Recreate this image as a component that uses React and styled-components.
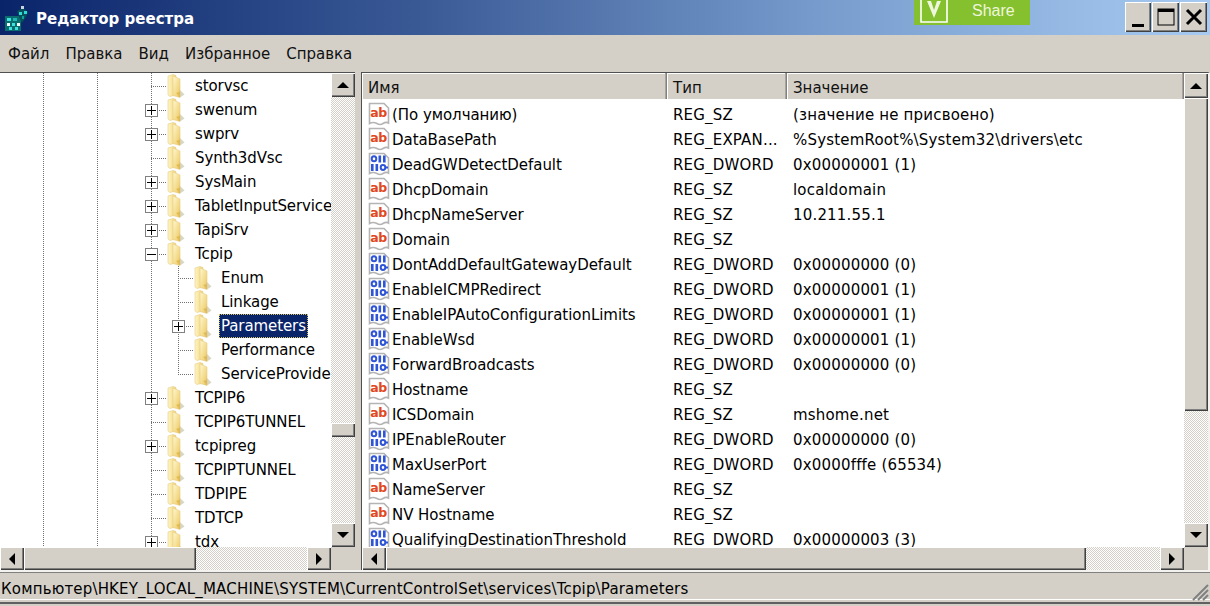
import React from "react";
import styled, { createGlobalStyle } from "styled-components";

const UI_FONT = `"DejaVu Sans", Verdana, sans-serif`;
const FACE = "#d4d0c8";

const GlobalStyle = createGlobalStyle`
  html, body {
    margin: 0;
    padding: 0;
    background: ${FACE};
    font-family: ${UI_FONT};
  }
`;

const Window = styled.div`
  width: 1210px;
  height: 606px;
  display: flex;
  flex-direction: column;
  overflow: hidden;
  background: ${FACE};
  font-size: 15px;
  color: #000;
`;

const TitleBar = styled.div`
  height: 35px;
  flex: none;
  display: flex;
  align-items: flex-start;
  padding: 0 3px 0 4px;
  box-sizing: border-box;
  background: linear-gradient(90deg, #0a246a 0%, #3a5a96 35%, #7ba0d0 70%, #a6caf0 100%);
`;

const AppIcon = styled.svg`
  width: 26px;
  height: 26px;
  margin-top: 5px;
  flex: none;
`;

const TitleText = styled.div`
  margin: 9px 0 0 6px;
  color: #fff;
  font-weight: 700;
  font-size: 15px;
  line-height: 20px;
`;

const ShareButton = styled.div`
  margin-left: auto;
  width: 116px;
  height: 25px;
  display: flex;
  align-items: flex-start;
  background: #85c02e;
  color: #eef7dc;
  font-family: "Liberation Sans", Arial, sans-serif;
  font-size: 16px;
  line-height: 21px;
`;

const ShareLabel = styled.span`
  margin-left: 24px;
`;

const WindowControls = styled.div`
  margin: 2px 0 0 95px;
  display: flex;
  gap: 1px;
`;

const bevel = `
  background-color: ${FACE};
  box-shadow: inset 1px 1px 0 #fff, inset -1px -1px 0 #404040, inset -2px -2px 0 #808080;
`;

const ControlButton = styled.div`
  ${bevel}
  width: ${(p) => p.$width || 26}px;
  height: 30px;
  display: flex;
  align-items: center;
  justify-content: center;
`;

const MenuBar = styled.div`
  height: 37px;
  flex: none;
  display: flex;
  align-items: center;
  gap: 16px;
  padding: 0 8px;
  box-sizing: border-box;
`;

const MenuItem = styled.span`
  color: #111;
`;

const Panes = styled.div`
  height: 500px;
  flex: none;
  display: flex;
`;

const Pane = styled.div`
  box-sizing: border-box;
  width: ${(p) => p.$width}px;
  flex: none;
  display: grid;
  grid-template-columns: 1fr 24px;
  grid-template-rows: 474px 23px;
  border-style: solid;
  border-color: #505050 #f4f2ee #707070 #505050;
  border-width: 1px ${(p) => p.$right}px 2px ${(p) => p.$left}px;
`;

const Splitter = styled.div`
  width: 6px;
  flex: none;
`;

const dots = "repeating-linear-gradient(#707070 0 1px, transparent 1px 2px)";
const dotsH = "repeating-linear-gradient(90deg, #707070 0 1px, transparent 1px 2px)";

const Tree = styled.div`
  overflow: hidden;
  background-color: #fff;
  background-image: ${dots}, ${dots}, ${dots};
  background-repeat: no-repeat;
  background-size: 1px 100%;
  background-position: 43px 0, 97px 0, 151px 0;
  padding-top: 1px;
  box-sizing: border-box;
`;

const Group = styled.div`
  background-image: ${dots};
  background-repeat: no-repeat;
  background-size: 1px calc(100% - 12px);
  background-position: 178px 0;
`;

const TreeRow = styled.div`
  height: 24px;
  display: flex;
  align-items: center;
  padding-left: ${(p) => (p.$level === 2 ? 172 : 145)}px;
  white-space: nowrap;
`;

const Connector = styled.div`
  width: 22px;
  height: 100%;
  flex: none;
  display: flex;
  align-items: center;
  background-image: ${dotsH};
  background-repeat: no-repeat;
  background-size: 16px 1px;
  background-position: right center;
`;

const Expander = styled.div`
  width: 11px;
  height: 11px;
  border: 1px solid #808080;
  background: #fff;
  display: flex;
  align-items: center;
  justify-content: center;
`;

const FolderIcon = styled.svg`
  width: 18px;
  height: 24px;
  flex: none;
`;

const TreeLabel = styled.span`
  box-sizing: border-box;
  margin-left: ${(p) => (p.$level === 2 ? 7 : 8)}px;
  padding: 1px 2px 0;
  line-height: 23px;
  letter-spacing: -0.1px;
  color: ${(p) => (p.$selected ? "#fff" : "#000")};
  background: ${(p) => (p.$selected ? "#0a246a" : "transparent")};
  outline: ${(p) => (p.$selected ? "1px dotted #d8c060" : "none")};
  outline-offset: -1px;
`;

const VBar = styled.div`
  display: flex;
  flex-direction: column;
`;

const HBar = styled.div`
  display: flex;
`;

const Corner = styled.div`
  background: ${FACE};
`;

const Track = styled.div`
  flex: ${(p) => (p.$size ? `0 0 ${p.$size}px` : "1")};
  background: conic-gradient(${FACE} 25%, #fff 0 50%, ${FACE} 0 75%, #fff 0) 0 0 / 2px 2px;
`;

const Thumb = styled.div`
  ${bevel}
  flex: 0 0 ${(p) => p.$size}px;
`;

const ArrowButton = styled.div`
  ${bevel}
  flex: 0 0 ${(p) => p.$size || 24}px;
  display: flex;
  align-items: center;
  justify-content: center;
`;

const arrowShapes = {
  up: "border-width: 0 6px 6px; border-color: transparent transparent #000;",
  down: "border-width: 6px 6px 0; border-color: #000 transparent transparent;",
  left: "border-width: 6px 6px 6px 0; border-color: transparent #000 transparent transparent;",
  right: "border-width: 6px 0 6px 6px; border-color: transparent transparent transparent #000;",
};

const Arrow = styled.span`
  width: 0;
  height: 0;
  border-style: solid;
  ${(p) => arrowShapes[p.$dir]}
`;

const Values = styled.div`
  overflow: hidden;
  background: #fff;
`;

const columns = "305px 120px 1fr";

const HeaderRow = styled.div`
  height: 26px;
  display: grid;
  grid-template-columns: ${columns};
  margin-bottom: 3px;
  box-sizing: border-box;
  border-bottom: 1px solid #808080;
`;

const HeaderCell = styled.div`
  background: ${FACE};
  padding: 4px 0 0 6px;
  line-height: 22px;
  color: #111;
  box-sizing: border-box;
  box-shadow: inset -1px 0 0 #808080, inset -2px 0 0 #a8a49c, inset 1px 1px 0 #fff;
`;

const ValueRow = styled.div`
  height: 25px;
  display: grid;
  grid-template-columns: ${columns};
  align-items: center;
  white-space: nowrap;
`;

const NameCell = styled.div`
  display: flex;
  align-items: center;
  gap: 2px;
  padding-left: 6px;
  letter-spacing: -0.05px;
`;

const Cell = styled.div`
  padding-left: 6px;
  overflow: hidden;
  letter-spacing: 0.18px;
`;

const TypeIconBox = styled.svg`
  width: 22px;
  height: 25px;
  flex: none;
`;

const StatusBar = styled.div`
  height: 32px;
  flex: none;
  box-sizing: border-box;
  display: flex;
  justify-content: space-between;
  align-items: flex-start;
  border-top: 1px solid #808080;
  padding: 5px 1px 0;
  letter-spacing: 0.17px;
  line-height: 22px;
  box-shadow: inset 0 -2px 0 #606060, inset 0 -4px 0 ${FACE}, inset 0 -5px 0 #fff, 0 -2px 0 #f4f2ee;
`;

const Grip = styled.svg`
  width: 20px;
  height: 20px;
  margin-top: 3px;
  flex: none;
`;

const treeRows = [
  ["storvsc"],
  ["swenum", true],
  ["swprv", true],
  ["Synth3dVsc"],
  ["SysMain", true],
  ["TabletInputService", true],
  ["TapiSrv", true],
];

const tcpipChildren = [
  ["Enum"],
  ["Linkage"],
  ["Parameters", true, true],
  ["Performance"],
  ["ServiceProvider"],
];

const treeRowsAfter = [
  ["TCPIP6", true],
  ["TCPIP6TUNNEL"],
  ["tcpipreg", true],
  ["TCPIPTUNNEL"],
  ["TDPIPE"],
  ["TDTCP"],
  ["tdx", true],
];

const values = [
  ["ab", "(По умолчанию)", "REG_SZ", "(значение не присвоено)"],
  ["ab", "DataBasePath", "REG_EXPAN...", "%SystemRoot%\\System32\\drivers\\etc"],
  ["bin", "DeadGWDetectDefault", "REG_DWORD", "0x00000001 (1)"],
  ["ab", "DhcpDomain", "REG_SZ", "localdomain"],
  ["ab", "DhcpNameServer", "REG_SZ", "10.211.55.1"],
  ["ab", "Domain", "REG_SZ", ""],
  ["bin", "DontAddDefaultGatewayDefault", "REG_DWORD", "0x00000000 (0)"],
  ["bin", "EnableICMPRedirect", "REG_DWORD", "0x00000001 (1)"],
  ["bin", "EnableIPAutoConfigurationLimits", "REG_DWORD", "0x00000001 (1)"],
  ["bin", "EnableWsd", "REG_DWORD", "0x00000001 (1)"],
  ["bin", "ForwardBroadcasts", "REG_DWORD", "0x00000000 (0)"],
  ["ab", "Hostname", "REG_SZ", ""],
  ["ab", "ICSDomain", "REG_SZ", "mshome.net"],
  ["bin", "IPEnableRouter", "REG_DWORD", "0x00000000 (0)"],
  ["bin", "MaxUserPort", "REG_DWORD", "0x0000fffe (65534)"],
  ["ab", "NameServer", "REG_SZ", ""],
  ["ab", "NV Hostname", "REG_SZ", ""],
  ["bin", "QualifyingDestinationThreshold", "REG_DWORD", "0x00000003 (3)"],
];

const Folder = () => (
  <FolderIcon viewBox="0 0 18 24">
    <defs>
      <linearGradient id="folderBack" x1="0" y1="0" x2="1" y2="0">
        <stop offset="0" stopColor="#fff6c4" />
        <stop offset="1" stopColor="#f0d27a" />
      </linearGradient>
      <linearGradient id="folderFront" x1="0" y1="0" x2="1" y2="1">
        <stop offset="0" stopColor="#fff8d0" />
        <stop offset="0.7" stopColor="#f2d680" />
        <stop offset="1" stopColor="#d8ae48" />
      </linearGradient>
    </defs>
    <path d="M1 2 L6 0.5 L9 1.5 V21 L3 22.5 L1 21Z" fill="url(#folderBack)" stroke="#e4cf8c" strokeWidth="0.6" />
    <path d="M6 2 L13 5 V23.5 L6 21.5Z" fill="url(#folderFront)" stroke="#e8cf80" strokeWidth="0.6" />
    <path d="M13 16 L17.5 20.5 L13 23.5Z" fill="#c9c4a8" opacity="0.7" />
    <path d="M9 19 L13 18 V22 Z" fill="#e2b94e" />
  </FolderIcon>
);

const ExpanderGlyph = ({ open }) => (
  <svg width="9" height="9" viewBox="0 0 9 9">
    <rect x="0" y="4" width="9" height="1" fill="#000" />
    {!open && <rect x="4" y="0" width="1" height="9" fill="#000" />}
  </svg>
);

const Node = ({ name, expandable, open, selected, level }) => (
  <TreeRow $level={level}>
    <Connector>
      {expandable && (
        <Expander>
          <ExpanderGlyph open={open} />
        </Expander>
      )}
    </Connector>
    <Folder />
    <TreeLabel $level={level} $selected={selected}>{name}</TreeLabel>
  </TreeRow>
);

const DocShape = () => (
  <path
    d="M1.5 1.5 H16 L20.5 6 V21 Q18 19.5 15 21.5 Q12 23.5 9 21.5 Q5 19.5 1.5 21.5Z"
    fill="#fff"
    stroke="#b4b4b4"
    strokeWidth="1.6"
  />
);

const TypeIcon = ({ kind }) => (
  <TypeIconBox viewBox="0 0 22 25">
    <DocShape />
    {kind === "ab" ? (
      <text x="2.2" y="15" fontFamily="'DejaVu Sans', sans-serif" fontWeight="700" fontSize="12.5" letterSpacing="-0.4" fill="#e0481e">
        ab
      </text>
    ) : (
      <g fill="#2f55d6">
        <ellipse cx="6" cy="6.8" rx="2.3" ry="2.5" fill="none" stroke="#2f55d6" strokeWidth="2" />
        <rect x="10.5" y="3.5" width="2.6" height="7" />
        <rect x="15" y="3.5" width="2.6" height="7" />
        <rect x="3" y="12" width="2.6" height="7" />
        <rect x="7.5" y="12" width="2.6" height="7" />
        <ellipse cx="15" cy="15.5" rx="2.3" ry="2.4" fill="none" stroke="#2f55d6" strokeWidth="2" />
        <rect x="17" y="14.5" width="3" height="2" />
      </g>
    )}
  </TypeIconBox>
);

const RegeditIcon = () => (
  <AppIcon viewBox="0 0 26 26">
    <rect x="1" y="11" width="16" height="15" fill="#0b6e6e" />
    <rect x="3" y="13" width="4" height="3" fill="#3fe0e0" />
    <rect x="9" y="13" width="4" height="3" fill="#1fb8b8" />
    <rect x="3" y="18" width="3" height="3" fill="#eaffff" />
    <rect x="8" y="18" width="3" height="3" fill="#3fe0e0" />
    <rect x="13" y="18" width="3" height="3" fill="#eaffff" />
    <rect x="5" y="22" width="3" height="3" fill="#3fe0e0" />
    <rect x="11" y="22" width="3" height="3" fill="#3fe0e0" />
    <path d="M13 6 L19 3 L24 7 L22 12 L18 18 L15 12Z" fill="#05505a" />
    <rect x="17" y="1" width="3" height="3" fill="#c8d4dc" />
    <rect x="20" y="6" width="3" height="3" fill="#2fd8d8" />
    <rect x="15" y="7" width="3" height="3" fill="#2fd8d8" />
    <rect x="18" y="11" width="2" height="3" fill="#0fa0a0" />
  </AppIcon>
);

const VLogoBox = styled.svg`
  width: 28px;
  height: 23px;
  margin-left: 6px;
  flex: none;
`;

const VLogo = () => (
  <VLogoBox viewBox="0 0 28 23">
    <path d="M1 0 V22 H27 V0" fill="none" stroke="#fff" strokeWidth="1.6" />
    <path d="M7 1 L14 18 L21 1 H17 L14 10 L11 1Z" fill="#eef7dc" />
  </VLogoBox>
);

const ScrollV = ({ before, thumb, upSize }) => (
  <VBar>
    <ArrowButton $size={upSize}><Arrow $dir="up" /></ArrowButton>
    {before > 0 && <Track $size={before} />}
    <Thumb $size={thumb} />
    <Track />
    <ArrowButton><Arrow $dir="down" /></ArrowButton>
  </VBar>
);

const ScrollH = ({ thumb }) => (
  <HBar>
    <ArrowButton><Arrow $dir="left" /></ArrowButton>
    <Thumb $size={thumb} />
    <Track />
    <ArrowButton><Arrow $dir="right" /></ArrowButton>
  </HBar>
);

export default function App() {
  return (
    <Window>
      <GlobalStyle />
      <TitleBar>
        <RegeditIcon />
        <TitleText>Редактор реестра</TitleText>
        <ShareButton>
          <VLogo />
          <ShareLabel>Share</ShareLabel>
        </ShareButton>
        <WindowControls>
          <ControlButton>
            <svg width="14" height="22" viewBox="0 0 14 22"><rect x="1" y="18" width="12" height="3" fill="#000" /></svg>
          </ControlButton>
          <ControlButton $width={27}>
            <svg width="18" height="18" viewBox="0 0 18 18">
              <rect x="1" y="1" width="16" height="16" fill="none" stroke="#000" strokeWidth="1" />
              <rect x="1" y="1" width="16" height="3" fill="#000" />
            </svg>
          </ControlButton>
          <ControlButton $width={27}>
            <svg width="18" height="18" viewBox="0 0 18 18">
              <path d="M2 2 L16 16 M16 2 L2 16" stroke="#000" strokeWidth="3" />
            </svg>
          </ControlButton>
        </WindowControls>
      </TitleBar>

      <MenuBar>
        {["Файл", "Правка", "Вид", "Избранное", "Справка"].map((m) => (
          <MenuItem key={m}>{m}</MenuItem>
        ))}
      </MenuBar>

      <Panes>
        <Pane $width={355} $left={0} $right={0}>
          <Tree>
            {treeRows.map(([name, exp]) => (
              <Node key={name} name={name} expandable={exp} />
            ))}
            <Node name="Tcpip" expandable open />
            <Group>
              {tcpipChildren.map(([name, exp, sel]) => (
                <Node key={name} name={name} expandable={exp} selected={sel} level={2} />
              ))}
            </Group>
            {treeRowsAfter.map(([name, exp]) => (
              <Node key={name} name={name} expandable={exp} />
            ))}
          </Tree>
          <ScrollV before={326} thumb={14} />
          <ScrollH thumb={172} />
          <Corner />
        </Pane>
        <Splitter />
        <Pane $width={849} $left={1} $right={2}>
          <Values>
            <HeaderRow>
              <HeaderCell>Имя</HeaderCell>
              <HeaderCell>Тип</HeaderCell>
              <HeaderCell>Значение</HeaderCell>
            </HeaderRow>
            {values.map(([kind, name, type, value]) => (
              <ValueRow key={name}>
                <NameCell>
                  <TypeIcon kind={kind} />
                  {name}
                </NameCell>
                <Cell>{type}</Cell>
                <Cell>{value}</Cell>
              </ValueRow>
            ))}
          </Values>
          <ScrollV before={0} thumb={313} upSize={25} />
          <ScrollH thumb={700} />
          <Corner />
        </Pane>
      </Panes>

      <StatusBar>
        <span>Компьютер\HKEY_LOCAL_MACHINE\SYSTEM\CurrentControlSet\services\Tcpip\Parameters</span>
        <Grip viewBox="0 0 20 20">
          <path d="M4 19 L19 4 M9 19 L19 9 M14 19 L19 14" stroke="#808080" strokeWidth="2" />
        </Grip>
      </StatusBar>
    </Window>
  );
}
